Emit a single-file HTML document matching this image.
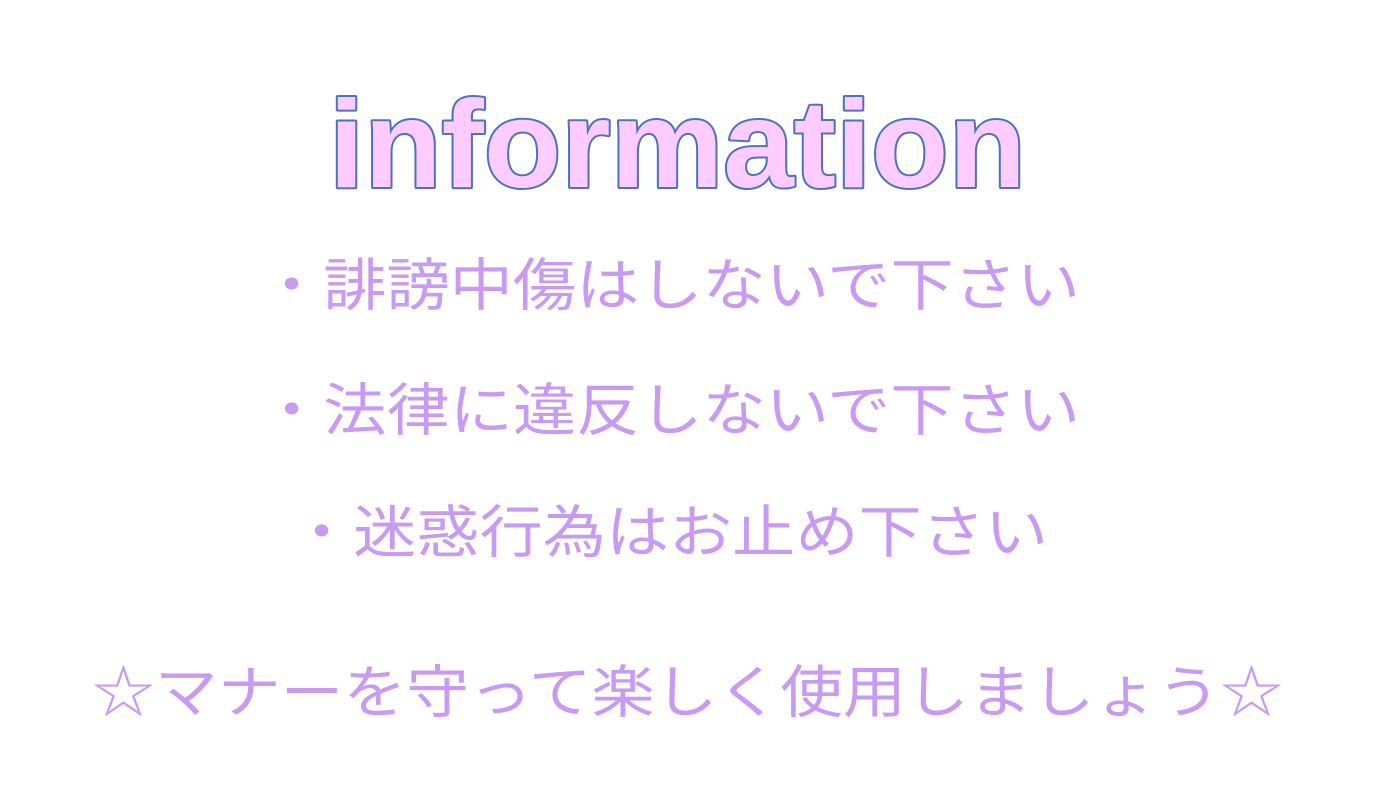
<!DOCTYPE html>
<html><head><meta charset="utf-8"><style>
html,body{margin:0;padding:0;background:#fff;width:1392px;height:798px;overflow:hidden}
</style></head><body>
<svg width="1392" height="798" viewBox="0 0 1392 798" xmlns="http://www.w3.org/2000/svg">
<text x="329" y="187" textLength="697" lengthAdjust="spacingAndGlyphs" font-family="Liberation Sans, sans-serif" font-weight="bold" font-size="124" fill="#ffccff" stroke="#4f72c0" stroke-width="4" stroke-linejoin="round" paint-order="stroke">information</text>
<g font-family="Noto Sans CJK JP, sans-serif" font-size="57" fill="#c99af2">
<text x="260" y="305" textLength="820" lengthAdjust="spacingAndGlyphs">・誹謗中傷はしないで下さい</text>
<text x="260" y="430" textLength="820" lengthAdjust="spacingAndGlyphs">・法律に違反しないで下さい</text>
<text x="290" y="552" textLength="758" lengthAdjust="spacingAndGlyphs">・迷惑行為はお止め下さい</text>
<text x="92" y="712" textLength="1191" lengthAdjust="spacingAndGlyphs">☆マナーを守って楽しく使用しましょう☆</text>
</g>
</svg>
</body></html>
